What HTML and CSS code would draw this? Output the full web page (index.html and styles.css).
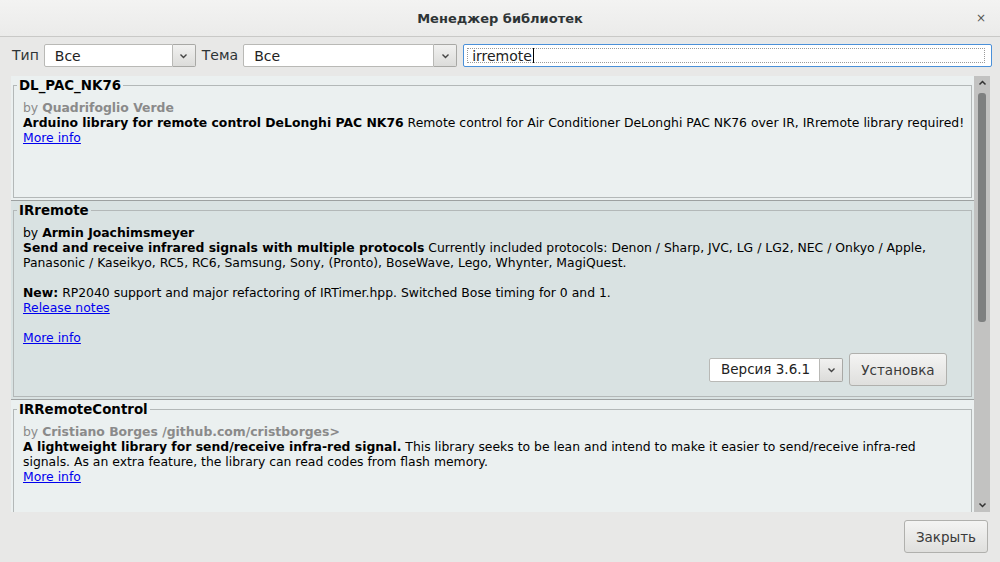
FILE: index.html
```html
<!DOCTYPE html>
<html lang="ru">
<head>
  <meta charset="UTF-8" />
  <title>Менеджер библиотек</title>
  <link rel="stylesheet" href="styles.css">
</head>
<body>
  <div class="window">

    <!-- Title bar -->
    <header class="titlebar">
      <span></span>
      <span class="title">Менеджер библиотек</span>
      <span class="close">×</span>
    </header>

    <!-- Filters -->
    <div class="filters">
      <span class="label">Тип</span>
      <div class="combo combo-type">
        <span class="combo-text">Все</span>
        <span class="combo-btn"><svg width="9" height="6" viewBox="0 0 9 6"><path d="M1.5 1.5 L4.5 4.5 L7.5 1.5" fill="none" stroke="#444" stroke-width="1.4"/></svg></span>
      </div>
      <span class="label">Тема</span>
      <div class="combo combo-topic">
        <span class="combo-text">Все</span>
        <span class="combo-btn"><svg width="9" height="6" viewBox="0 0 9 6"><path d="M1.5 1.5 L4.5 4.5 L7.5 1.5" fill="none" stroke="#444" stroke-width="1.4"/></svg></span>
      </div>
      <div class="search">
        <div class="search-focus">irremote<span class="caret"></span></div>
      </div>
    </div>

    <!-- Library list -->
    <div class="list-area">
      <div class="list">

        <div class="item">
          <fieldset class="lib lib-short">
            <legend>DL_PAC_NK76</legend>
            <p class="author">by <b>Quadrifoglio Verde</b></p>
            <p class="desc"><b>Arduino library for remote control DeLonghi PAC NK76</b> Remote control for Air Conditioner DeLonghi PAC NK76 over IR, IRremote library required!</p>
            <a href="#" class="link">More info</a>
          </fieldset>
        </div>

        <div class="item selected">
          <fieldset class="lib">
            <legend>IRremote</legend>
            <p class="author">by <b>Armin Joachimsmeyer</b></p>
            <p class="desc"><b>Send and receive infrared signals with multiple protocols</b> Currently included protocols: Denon / Sharp, JVC, LG / LG2, NEC / Onkyo / Apple, Panasonic / Kaseikyo, RC5, RC6, Samsung, Sony, (Pronto), BoseWave, Lego, Whynter, MagiQuest.</p>
            <p class="notes"><b>New:</b> RP2040 support and major refactoring of IRTimer.hpp. Switched Bose timing for 0 and 1.</p>
            <a href="#" class="link">Release notes</a>
            <a href="#" class="link more">More info</a>
            <div class="actions">
              <div class="combo combo-version">
                <span class="combo-text">Версия 3.6.1</span>
                <span class="combo-btn"><svg width="9" height="6" viewBox="0 0 9 6"><path d="M1.5 1.5 L4.5 4.5 L7.5 1.5" fill="none" stroke="#444" stroke-width="1.4"/></svg></span>
              </div>
              <button class="btn btn-install">Установка</button>
            </div>
          </fieldset>
        </div>

        <div class="item">
          <fieldset class="lib lib-short">
            <legend>IRRemoteControl</legend>
            <p class="author">by <b>Cristiano Borges /github.com/cristborges&gt;</b></p>
            <p class="desc"><b>A lightweight library for send/receive infra-red signal.</b> This library seeks to be lean and intend to make it easier to send/receive infra-red signals. As an extra feature, the library can read codes from flash memory.</p>
            <a href="#" class="link">More info</a>
          </fieldset>
        </div>

      </div>

      <div class="scrollbar">
        <span class="arrow"><svg width="9" height="6" viewBox="0 0 9 6"><path d="M1.5 4.5 L4.5 1.5 L7.5 4.5" fill="none" stroke="#333" stroke-width="1.5"/></svg></span>
        <div class="track"><div class="thumb"></div></div>
        <span class="arrow"><svg width="9" height="6" viewBox="0 0 9 6"><path d="M1.5 1.5 L4.5 4.5 L7.5 1.5" fill="none" stroke="#333" stroke-width="1.5"/></svg></span>
      </div>
    </div>

    <!-- Footer -->
    <footer class="footer">
      <button class="btn btn-close">Закрыть</button>
    </footer>

  </div>
</body>
</html>
```

FILE: styles.css
```css
/* Basic reset */
* { margin: 0; padding: 0; box-sizing: border-box; }
body {
  width: 1000px;
  height: 562px;
  overflow: hidden;
  background: #e8e8e7;
  color: #000;
  font-family: "DejaVu Sans", sans-serif;
}
.window { display: flex; flex-direction: column; height: 562px; }

/* === Title bar === */
.titlebar {
  height: 37px;
  display: grid;
  grid-template-columns: 1fr auto 1fr;
  align-items: center;
  background: linear-gradient(#f3f3f2, #ebebea);
  border-bottom: 1px solid #c9c9c7;
}
.titlebar .title { font-size: 13px; font-weight: bold; color: #2e3436; }
.titlebar .close { justify-self: end; margin-right: 14px; font-size: 12px; color: #555; }

/* === Filter row === */
.filters {
  height: 39px;
  display: flex;
  align-items: flex-start;
  padding: 7px 8px 0 12px;
  font-size: 14px;
  color: #2e3436;
}
.filters .label { margin-right: 5px; line-height: 23px; }
.combo {
  display: flex;
  height: 23px;
  margin-right: 6px;
}
.combo-text {
  flex: 1;
  display: flex;
  align-items: center;
  padding-left: 10px;
  background: #fff;
  border: 1px solid #b9b9b6;
  border-radius: 2px 0 0 2px;
  font-size: 14px;
  color: #222;
}
.combo-btn {
  width: 23px;
  display: flex;
  align-items: center;
  justify-content: center;
  background: linear-gradient(#f1f1f0, #dcdcda);
  border: 1px solid #a8a8a5;
  border-left: none;
  border-radius: 0 2px 2px 0;
}
.combo-type { width: 152px; }
.combo-topic { width: 214px; }
.search {
  flex: 1;
  height: 23px;
  padding: 3px;
  background: #fff;
  border: 1px solid #4a90d9;
  border-radius: 2px;
}
.search-focus {
  height: 15px;
  margin-right: 3px;
  padding-left: 4px;
  border: 1px dotted #999;
  font-size: 14px;
  line-height: 14px;
  color: #222;
  display: flex;
  align-items: center;
}
.caret { width: 1px; height: 15px; background: #000; margin-left: 1px; }

/* === Library list === */
.list-area {
  height: 436px;
  display: flex;
  margin: 0 10px 0 11px;
}
.list {
  flex: 1;
  overflow: hidden;
  background: #ebf0f0;
  font-size: 12.4px;
  line-height: 15px;
}
.item {
  padding: 2px 2px 2px 2px;
  border-bottom: 1px solid #9da1a1;
}
.item.selected { background: #d9e2e2; }
.lib {
  border: 1px solid #b3b8b8;
  padding: 7px 6px 10px 9px;
}
.lib-short { min-height: 120px; }
.lib legend {
  margin-left: -6px;
  padding: 0 2px;
  font-weight: bold;
  font-size: 13.4px;
}
.author { color: #8a8a8a; }
.selected .author { color: #000; }
.notes { margin-top: 15px; }
.link { display: table; color: #0000ee; }
.link.more { margin-top: 15px; }
.actions {
  display: flex;
  justify-content: flex-end;
  align-items: center;
  margin: 8px 18px 0 0;
}
.combo-version { width: 134px; height: 24px; }
.combo-version .combo-text { padding-left: 11px; font-size: 13.5px; }

/* Scrollbar */
.scrollbar {
  width: 16px;
  display: flex;
  flex-direction: column;
  background: #c2c2c1;
}
.scrollbar .arrow {
  height: 14px;
  display: flex;
  align-items: center;
  justify-content: center;
}
.track { flex: 1; padding: 3px 4px; }
.thumb {
  width: 8px;
  height: 229px;
  background: #7e8080;
  border-radius: 3px;
}

/* Buttons */
.btn {
  height: 33px;
  padding: 0 10px;
  background: linear-gradient(#f4f4f3, #dfdfdd);
  border: 1px solid #b0b0ad;
  border-radius: 3px;
  font-family: "DejaVu Sans", sans-serif;
  font-size: 13.5px;
  color: #3a3a3a;
}
.btn-install { width: 98px; }

/* === Footer === */
.footer {
  flex: 1;
  display: flex;
  justify-content: flex-end;
  align-items: flex-start;
  padding: 8px 12px 0 0;
}
.btn-close { width: 84px; }
```
